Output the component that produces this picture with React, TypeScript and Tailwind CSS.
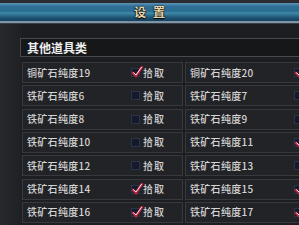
import React from 'react'

type Item = { name: string; checked: boolean }

const left: Item[] = [
  { name: '铜矿石纯度19', checked: true },
  { name: '铁矿石纯度6', checked: false },
  { name: '铁矿石纯度8', checked: false },
  { name: '铁矿石纯度10', checked: false },
  { name: '铁矿石纯度12', checked: false },
  { name: '铁矿石纯度14', checked: true },
  { name: '铁矿石纯度16', checked: true },
]

const right: Item[] = [
  { name: '铜矿石纯度20', checked: true },
  { name: '铁矿石纯度7', checked: false },
  { name: '铁矿石纯度9', checked: false },
  { name: '铁矿石纯度11', checked: true },
  { name: '铁矿石纯度13', checked: false },
  { name: '铁矿石纯度15', checked: true },
  { name: '铁矿石纯度17', checked: true },
]

function Check({ checked }: { checked: boolean }) {
  return (
    <span className="relative w-[9px] h-[9px] shrink-0 bg-[#141a2c] border border-[#2c3448]">
      {checked && (
        <svg viewBox="0 0 12 12" className="absolute -left-[1px] -top-[3px] w-[12px] h-[12px] overflow-visible">
          <path d="M2 7 L5 10 L11 1" fill="none" stroke="#c0203a" strokeWidth="2.6" strokeLinecap="round" />
          <path d="M2.5 6.8 L5 9 L10.5 1.3" fill="none" stroke="#f2e8ea" strokeWidth="1" strokeLinecap="round" />
        </svg>
      )}
    </span>
  )
}

function Cell({ item }: { item: Item }) {
  return (
    <div className="flex items-center h-[21px] w-[161px] shrink-0 bg-[#222326] border border-[#38393c] pl-[4px]">
      <span className="w-[104px] shrink-0 text-[10px] font-medium text-[#d4d4d4] leading-none tracking-[0.3px]">
        {item.name}
      </span>
      <Check checked={item.checked} />
      <span className="ml-[3px] text-[10px] font-medium text-[#d4d4d4] leading-none tracking-[1px] whitespace-nowrap">
        拾取
      </span>
    </div>
  )
}

export default function App() {
  return (
    <div
      className="w-[299px] h-[225px] overflow-hidden bg-[#1d1e21] flex flex-col"
      style={{ fontFamily: '"Noto Sans CJK SC", "Noto Sans", sans-serif' }}
    >
      <div className="h-[3px] bg-[#2a2c31]" />
      <div className="relative h-[18px] bg-[linear-gradient(to_bottom,#5d93b5_0%,#2f6f97_20%,#2a6d92_45%,#3f8aa8_55%,#1f5676_80%,#17405c_100%)] flex items-center justify-center">
        <span className="text-[12px] font-bold text-[#e6d5a8] tracking-[7px] pl-[7px] leading-none [text-shadow:0_0_2px_#000,0_1px_1px_#000]">
          设置
        </span>
      </div>
      <div className="h-[2px] bg-[#7d95a6]" />
      <div className="h-[1px] bg-[#3b3e44]" />
      <div className="flex-1 bg-[linear-gradient(to_right,#26282d,#202125_20px,#1d1e21_22px)] pl-[20px] pt-[14px]">
        <div className="h-[19px] bg-[#161719] border border-[#48494c] border-r-0 flex items-center pl-[6px]">
          <span className="text-[12px] font-bold text-[#eeeeee] leading-none">其他道具类</span>
        </div>
        <div className="flex flex-col gap-[2.33px] mt-[5px] pl-[2px]">
          {left.map((l, i) => (
            <div key={i} className="flex gap-[2px]">
              <Cell item={l} />
              <Cell item={right[i]} />
            </div>
          ))}
        </div>
      </div>
    </div>
  )
}
